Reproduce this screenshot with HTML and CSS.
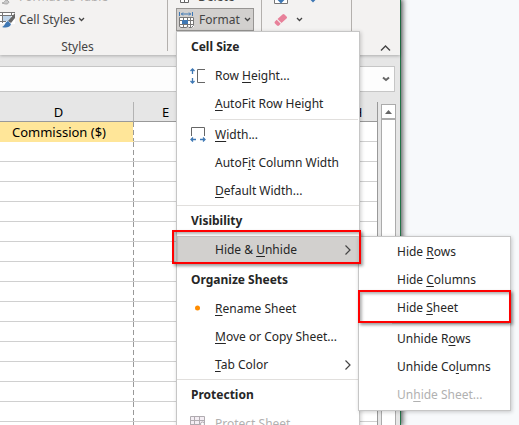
FILE: index.html
```html
<!DOCTYPE html>
<html lang="en">
<head>
<meta charset="utf-8">
<title>Commission sheet</title>
<link rel="stylesheet" href="styles.css">
</head>
<body>
<div class="desktop">
  <main class="app">
    <header class="ribbon">
      <section class="group group-styles">
        <button class="tool muted" type="button">
          <svg class="icon" viewBox="0 0 16 16"><path d="M1 1h10v9H1zM1 5h10M5 1v9" fill="none" stroke="#b5b5b5"/><path d="M13 6L9 11M2 14c3 0 2-3 5-3l2 2c-1 3-4 2-7 1z" fill="#c8c8c8" stroke="#a8a8a8"/></svg>
          Format as Table
        </button>
        <button class="tool" type="button">
          <svg class="icon" viewBox="0 0 16 16"><path d="M0 0h15v12H0z" fill="#fff"/><path d="M3 4h8v5H3z" fill="#bfd5ea"/><path d="M0 .5h15M0 3.500h13M0 9.500h6M2.500 0v11M11.500 0v3" fill="none" stroke="#777"/><path d="M15 1v5l-4 5-3-2z" fill="#666"/><path d="M8 9l3 3c-1 4-6 4-9 3 3-1 3-5 6-6z" fill="#3f78b4"/></svg>
          Cell Styles
          <svg class="chev" viewBox="0 0 7 5"><path d="M1 1l2.500 2.500L6 1"/></svg>
        </button>
        <h2 class="group-name">Styles</h2>
      </section>
      <section class="group group-cells">
        <button class="tool" type="button">
          <svg class="icon" viewBox="0 0 16 16"><path d="M2.500 4.500h8v9h-8zM2.500 9.500h8M6.500 9v5" fill="#fff" stroke="#666"/></svg>
          Delete
        </button>
        <button class="tool open" type="button" aria-expanded="true">
          <svg class="icon" viewBox="0 0 16 16"><path d="M1 5h14v10H1z" fill="#fff"/><path d="M.5 5.500h14v8l-2 2H10l-1-1-2 1H2l-1.500-1zM0 8.500h15M0 12.500h15M4.500 5v10M8.500 5v10M11.500 5v10" fill="none" stroke="#777"/><path d="M3 8h6v4H3z" fill="#3f78b4"/><path d="M.5 0v4M13.500 0v4M2 2h10M4 .5L2.500 2 4 3.500M10 .5L11.500 2 10 3.500" fill="none" stroke="#3f78b4"/></svg>
          Format
          <svg class="chev" viewBox="0 0 7 5"><path d="M1 1l2.500 2.500L6 1"/></svg>
        </button>
      </section>
      <section class="group group-editing">
        <button class="tool" type="button" aria-label="Fill">
          <svg class="icon" viewBox="0 0 16 16"><path d="M1.500 2.500h13v12h-13z" fill="#fff" stroke="#777"/><path d="M8 6v7M5 10l3 3 3-3" fill="none" stroke="#3f78b4" stroke-width="2"/></svg>
          <svg class="icon sort" viewBox="0 0 16 16"><path d="M8 2v9M5 9l3 3 3-3" fill="none" stroke="#3f78b4" stroke-width="2"/></svg>
        </button>
        <button class="tool" type="button" aria-label="Clear">
          <svg class="icon" viewBox="0 0 16 16"><path d="M9.500 2.500c.7-.7 1.300-.7 2 0l2 2c.7.7.7 1.300 0 2l-5 4.500-4-4z" fill="#e8819a"/><path d="M3.700 7.800l4 4-1.700 1.700c-.6.600-1.300.600-2 0l-2-2c-.6-.6-.6-1.300 0-2z" fill="#e8819a"/></svg>
          <svg class="chev" viewBox="0 0 7 5"><path d="M1 1l2.500 2.500L6 1"/></svg>
        </button>
      </section>
      <button class="collapse" type="button" aria-label="Collapse the ribbon">
        <svg viewBox="0 0 11 6"><path d="M1 5.500l4.500-4.500L10 5.500"/></svg>
      </button>
    </header>

    <div class="formula">
      <button class="expand" type="button" aria-label="Expand formula bar">
        <svg viewBox="0 0 8 6"><path d="M1 1.500l3 2.500 3-2.500"/></svg>
      </button>
    </div>

    <div class="workbook">
      <div class="sheet">
        <table class="grid">
          <colgroup><col class="col-d"><col><col><col><col></colgroup>
          <thead><tr><th>D</th><th>E</th><th>F</th><th>G</th><th>H</th></tr></thead>
          <tbody>
            <tr><td class="title">Commission ($)</td><td></td><td></td><td></td><td></td></tr>
            <tr><td></td><td></td><td></td><td></td><td></td></tr>
            <tr><td></td><td></td><td></td><td></td><td></td></tr>
            <tr><td></td><td></td><td></td><td></td><td></td></tr>
            <tr><td></td><td></td><td></td><td></td><td></td></tr>
            <tr><td></td><td></td><td></td><td></td><td></td></tr>
            <tr><td></td><td></td><td></td><td></td><td></td></tr>
            <tr><td></td><td></td><td></td><td></td><td></td></tr>
            <tr><td></td><td></td><td></td><td></td><td></td></tr>
            <tr><td></td><td></td><td></td><td></td><td></td></tr>
            <tr><td></td><td></td><td></td><td></td><td></td></tr>
            <tr><td></td><td></td><td></td><td></td><td></td></tr>
            <tr><td></td><td></td><td></td><td></td><td></td></tr>
            <tr><td></td><td></td><td></td><td></td><td></td></tr>
            <tr><td></td><td></td><td></td><td></td><td></td></tr>
            <tr><td></td><td></td><td></td><td></td><td></td></tr>
          </tbody>
        </table>
      </div>
      <div class="scrollbar">
        <button class="scroll-up" type="button" aria-label="Scroll up"><svg viewBox="0 0 7 4"><path d="M0 4l3.500-4L7 4z"/></svg></button>
        <div class="thumb"></div>
      </div>
    </div>
  </main>

  <nav class="menu format-menu" aria-label="Format">
    <section>
      <h3>Cell Size</h3>
      <button class="item" type="button">
        <svg class="item-icon" viewBox="0 0 16 16"><path d="M15 1.500H7.500v13H15" fill="none" stroke="#666"/><path d="M2.500 1v5M2.500 10v5M.5 3l2-2 2 2M.5 13l2 2 2-2" fill="none" stroke="#3f78b4" stroke-width="1.300"/></svg>
        <span>Row <u>H</u>eight...</span></button>
      <button class="item" type="button"><span><u>A</u>utoFit Row Height</span></button>
      <hr>
      <button class="item" type="button">
        <svg class="item-icon" viewBox="0 0 16 16"><path d="M1.500 9V.5h13V9" fill="none" stroke="#666"/><path d="M1 12.500h5M10 12.500h5M3 10.500l-2 2 2 2M13 10.500l2 2-2 2" fill="none" stroke="#3f78b4" stroke-width="1.300"/></svg>
        <span><u>W</u>idth...</span></button>
      <button class="item" type="button"><span>AutoF<u>i</u>t Column Width</span></button>
      <button class="item" type="button"><span><u>D</u>efault Width...</span></button>
    </section>
    <section class="ruled">
      <h3>Visibility</h3>
      <button class="item active marked" type="button" aria-expanded="true"><span>Hide &amp; <u>U</u>nhide</span><svg class="arrow" viewBox="0 0 6 10"><path d="M.5.5L5 5 .5 9.500"/></svg></button>
    </section>
    <section class="spaced">
      <h3>Organize Sheets</h3>
      <button class="item" type="button">
        <svg class="item-icon" viewBox="0 0 16 16"><circle cx="7.500" cy="7" r="2.500" fill="#ff8c00"/></svg>
        <span><u>R</u>ename Sheet</span></button>
      <button class="item" type="button"><span><u>M</u>ove or Copy Sheet...</span></button>
      <button class="item" type="button"><span><u>T</u>ab Color</span><svg class="arrow" viewBox="0 0 6 10"><path d="M.5.5L5 5 .5 9.500"/></svg></button>
    </section>
    <section class="ruled">
      <h3>Protection</h3>
      <button class="item" type="button" disabled>
        <svg class="item-icon" viewBox="0 0 16 16"><path d="M.5.5h14v12H.5zM0 4.500h15M0 8.500h15M4.500 0v13M9.500 0v13" fill="#f4eef4" stroke="#b0abb0"/><circle cx="12.500" cy="8" r="2" fill="#fff" stroke="#b0abb0"/></svg>
        <span><u>P</u>rotect Sheet...</span></button>
    </section>
  </nav>

  <nav class="menu hide-menu" aria-label="Hide and Unhide">
    <button class="item" type="button"><span>Hide <u>R</u>ows</span></button>
    <button class="item" type="button"><span>Hide <u>C</u>olumns</span></button>
    <button class="item marked" type="button"><span>Hide <u>S</u>heet</span></button>
    <hr>
    <button class="item" type="button"><span>Unhide R<u>o</u>ws</span></button>
    <button class="item" type="button"><span>Unhide Co<u>l</u>umns</span></button>
    <button class="item" type="button" disabled><span>Un<u>h</u>ide Sheet...</span></button>
  </nav>
</div>
</body>
</html>
```
FILE: styles.css
```css
* { box-sizing: border-box; }

body {
  margin: 0;
  background: #f7f9fb;
  color: #262626;
  font: 12px/16px "Noto Sans", "Open Sans", sans-serif;
}

button {
  margin: 0;
  padding: 0;
  border: 0;
  background: none;
  color: inherit;
  font: inherit;
}

h2, h3 { margin: 0; font-size: 12px; }

.desktop {
  position: relative;
  height: 100vh;
  overflow: hidden;
  padding-right: 118px;
}

.app {
  display: flex;
  flex-direction: column;
  height: 100%;
  border-right: 1px solid #217346;
  background: #e6e6e6;
  box-shadow: 1px 0 5px 1px rgba(0, 0, 0, .6);
}

/* Ribbon */
.ribbon {
  display: flex;
  flex: none;
  height: 55px;
  overflow: hidden;
  background: #f3f2f1;
  box-shadow: 0 1px 3px rgba(0, 0, 0, .25);
  color: #444;
}

.group {
  height: 66px;
  margin-top: -15px;
  border-right: 1px solid #b3b0ad;
}

.group-styles { width: 168px; }
.group-cells { width: 94px; padding-left: 8px; }
.group-editing { width: 90px; padding-left: 8px; }

.tool {
  display: flex;
  align-items: center;
  height: 23px;
  padding: 0 2px;
  gap: 3px;
  white-space: nowrap;
}

.group-styles .tool { padding: 0; }
.group-cells .tool { width: 78px; gap: 4px; }
.group-editing .tool { padding-left: 3px; gap: 7px; }
.muted { color: #b0aeac; }
.open { border: 1px solid #979593; background: #d2d0ce; }
.icon { flex: none; width: 16px; height: 16px; }
.sort { margin-left: 9px; }

.chev { flex: none; width: 7px; height: 5px; }
.chev path { fill: none; stroke: #444; stroke-width: 1.3; }

.group-name {
  padding: 8px 0 0;
  margin-right: 12px;
  font-weight: 400;
  text-align: center;
}

.collapse { margin: auto 9px 4px auto; line-height: 0; }
.collapse svg { width: 11px; height: 6px; fill: none; stroke: #444; stroke-width: 1.4; }

/* Formula bar */
.formula {
  display: flex;
  flex: none;
  justify-content: flex-end;
  align-items: center;
  height: 26px;
  margin: 11px 5px 0 0;
  padding-right: 4px;
  border: 1px solid #c6c6c6;
  border-left: 0;
  background: #fdfdfd;
}
.expand { line-height: 0; }
.expand svg { width: 8px; height: 6px; fill: none; stroke: #666; stroke-width: 2; }

/* Worksheet */
.workbook { display: flex; flex: 1; min-height: 0; padding-top: 10px; }

.sheet { flex: 1; min-width: 0; overflow: hidden; border-right: 1px solid #999; }

.grid {
  width: 390px;
  border-collapse: separate;
  border-spacing: 0;
  table-layout: fixed;
  color: #000;
}
.col-d { width: 134px; }

.grid th {
  height: 20px;
  padding: 0;
  border-right: 1px solid #b3b3b3;
  border-bottom: 1px solid #999;
  background: #e6e6e6;
  font-size: 13px;
  font-weight: 400;
  line-height: 18px;
}
.grid th:first-child { padding-right: 16px; }
.grid td {
  height: 20px;
  padding: 0;
  border-bottom: 1px solid #d0d0d0;
  background: #fff;
  font-size: 13px;
  line-height: 18px;
}
.grid td:first-child {
  background: linear-gradient(#999 5px, #fff 5px) right top / 1px 8px repeat-y #fff;
}
.grid td.title {
  padding-right: 16px;
  border-bottom-color: #ffe699;
  background-color: #ffe699;
  text-align: center;
}

.scrollbar {
  display: flex;
  flex-direction: column;
  width: 15px;
  margin: 2px 4px 0 3px;
}
.scroll-up {
  height: 15px;
  border: 1px solid #ababab;
  background: #fff;
  line-height: 0;
}
.scroll-up svg { width: 7px; height: 4px; fill: #666; }
.thumb { flex: 1; border: 1px solid #ababab; border-bottom: 0; background: #fff; }

/* Menus */
.menu {
  position: absolute;
  border: 1px solid #c6c6c6;
  background: #fff;
  box-shadow: 1px 1px 4px rgba(0, 0, 0, .2);
}
.format-menu { top: 31px; left: 176px; width: 184px; }
.hide-menu { top: 236px; left: 358px; width: 153px; padding: 1px 0; }

.menu h3 { padding: 7px 14px; font-weight: 700; }

.item {
  position: relative;
  display: flex;
  align-items: center;
  width: 100%;
  height: 28px;
  padding: 0 8px 0 38px;
  text-align: left;
  white-space: nowrap;
}
.item span { flex: 1; }
.item:disabled { color: #b1b1b1; }
.item u { text-underline-offset: 2px; }

.item-icon { flex: none; width: 16px; height: 16px; margin: 0 9px 0 -25px; }
.arrow { flex: none; width: 6px; height: 10px; fill: none; stroke: #444; stroke-width: 1.2; }

.menu hr { height: 1px; margin: 1px 1px 1px 33px; border: 0; background: #e1dfdd; }
.ruled { border-top: 1px solid #e1dfdd; }
.spaced { padding-top: 1px; }

.active { background: #d2d0ce; box-shadow: inset 0 0 0 1px #c4c2c0; }

/* Red call-out frames over the highlighted commands */
.marked::after {
  content: "";
  position: absolute;
  z-index: 1;
  inset: -6px -2px 0 -5px;
  border: 2px solid #f00;
  box-shadow: 2px 2px 3px rgba(0, 0, 0, .4), inset 2px 2px 3px rgba(0, 0, 0, .3);
}
.hide-menu .marked::after { inset: -4px -1px -1px -1px; }
```
